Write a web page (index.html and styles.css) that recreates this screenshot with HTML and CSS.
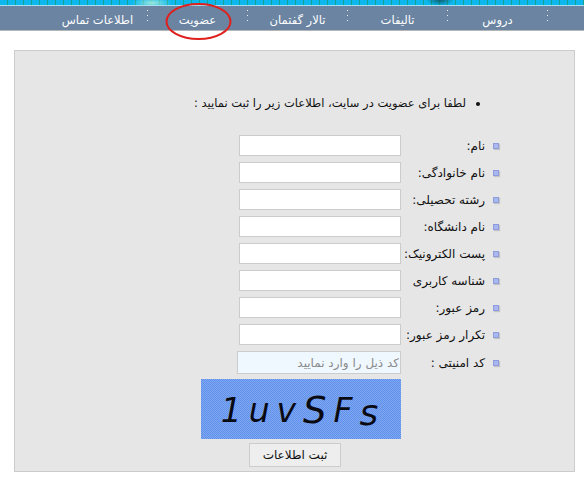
FILE: index.html
```html
<!DOCTYPE html>
<html lang="fa" dir="rtl">
<head>
    <meta charset="UTF-8">
    <meta name="viewport" content="width=device-width, initial-scale=1.0">
    <title>عضویت</title>
    <link rel="stylesheet" href="styles.css">
</head>
<body>
    <div class="top-strip"></div>
    <nav class="nav">
        <a class="nav-item nav-edge"></a>
        <span class="sep"></span>
        <a class="nav-item">دروس</a>
        <span class="sep"></span>
        <a class="nav-item">تالیفات</a>
        <span class="sep"></span>
        <a class="nav-item">تالار گفتمان</a>
        <span class="sep"></span>
        <a class="nav-item nav-active">عضویت
            <svg class="circle" width="70" height="42" viewBox="0 0 70 42"><ellipse cx="35.5" cy="21.5" rx="32" ry="17.5" fill="none" stroke="#e0201c" stroke-width="2"/></svg>
        </a>
        <span class="sep"></span>
        <a class="nav-item">اطلاعات تماس</a>
    </nav>

    <main class="card">
        <ul class="intro">
            <li>لطفا برای عضویت در سایت، اطلاعات زیر را ثبت نمایید :</li>
        </ul>
        <form class="form">
            <div class="row"><span class="mark"></span><label class="label">نام:</label><input class="field" type="text"></div>
            <div class="row"><span class="mark"></span><label class="label">نام خانوادگی:</label><input class="field" type="text"></div>
            <div class="row"><span class="mark"></span><label class="label">رشته تحصیلی:</label><input class="field" type="text"></div>
            <div class="row"><span class="mark"></span><label class="label">نام دانشگاه:</label><input class="field" type="text"></div>
            <div class="row"><span class="mark"></span><label class="label">پست الکترونیک:</label><input class="field" type="text"></div>
            <div class="row"><span class="mark"></span><label class="label">شناسه کاربری</label><input class="field" type="text"></div>
            <div class="row"><span class="mark"></span><label class="label">رمز عبور:</label><input class="field" type="password"></div>
            <div class="row"><span class="mark"></span><label class="label">تکرار رمز عبور:</label><input class="field" type="password"></div>
            <div class="row row-code"><span class="mark"></span><label class="label">کد امنیتی :</label><input class="field field-code" type="text" placeholder="کد ذیل را وارد نمایید"></div>
            <div class="captcha" dir="ltr"><span>1</span><span>u</span><span>v</span><span class="big">S</span><span>F</span><span class="low">s</span></div>
            <button class="submit" type="button">ثبت اطلاعات</button>
        </form>
    </main>
</body>
</html>
```

FILE: styles.css
```css
* {
    box-sizing: border-box;
}
body {
    margin: 0;
    background: #ffffff;
    color: #111111;
    font-family: Tahoma, "DejaVu Sans", sans-serif;
    font-size: 12px;
    overflow: hidden;
}
.top-strip {
    height: 6px;
    background:
        radial-gradient(ellipse 14px 6px at 440px 0, #0f5f6e, transparent),
        radial-gradient(ellipse 20px 6px at 152px 3px, #9fe8dc, transparent),
        repeating-linear-gradient(90deg, #0cb8ee 0, #0cb8ee 7px, #1aa08e 7px, #1aa08e 8px);
    border-bottom: 1px solid #a6dff2;
}
.nav {
    display: flex;
    align-items: center;
    height: 25px;
    background: #6a84a2;
    border-bottom: 1px solid #b5b5b5;
    color: #ffffff;
}
.nav-item {
    position: relative;
    width: 99px;
    padding-top: 3px;
    text-align: center;
    font-size: 11.5px;
}
.nav-edge {
    width: 36px;
}
.sep {
    width: 1px;
    height: 14px;
    margin-top: -2px;
    background: repeating-linear-gradient(180deg, #eef2f6 0, #eef2f6 1px, transparent 1px, transparent 5px);
}
.circle {
    position: absolute;
    left: 15px;
    top: -10px;
}
.card {
    margin: 19px 9px 0 14px;
    height: 422px;
    background: #e6e6e6;
    border: 1px solid #cccccc;
    padding-top: 45px;
}
.intro {
    margin: 0;
    padding: 0 108px 0 0;
    list-style: disc;
    font-size: 11.5px;
}
.form {
    display: flex;
    flex-direction: column;
    align-items: flex-start;
    margin-top: 25px;
    padding-right: 75px;
}
.row {
    display: flex;
    align-items: center;
    height: 21px;
    margin-bottom: 6px;
}
.mark {
    width: 6px;
    height: 6px;
    margin-left: 8px;
    background: #aab6ee;
    border: 1px solid #8d9cdc;
    box-shadow: 1px 1px 1px #c4c4c4;
}
.label {
    width: 80px;
    margin-left: 4px;
    padding-top: 1px;
    white-space: nowrap;
}
.field {
    width: 162px;
    height: 21px;
    background: #ffffff;
    border: 1px solid #cccccc;
    padding: 0 2px;
    font-family: inherit;
    font-size: 12px;
}
.row-code {
    height: 23px;
    margin-bottom: 5px;
}
.field-code {
    width: 164px;
    height: 23px;
    padding-right: 1px;
    background: #eff7ff;
}
.field-code::placeholder {
    color: #8a8a8a;
}
.captcha {
    width: 200px;
    height: 60px;
    margin-right: 98px;
    padding: 3px 3px 0 0;
    display: flex;
    align-items: center;
    justify-content: center;
    gap: 7px;
    background: repeating-conic-gradient(#80a8f2 0 25%, #5f91ea 0 50%) 0 0 / 2px 2px;
    color: #0a0a12;
    font-family: "DejaVu Sans", sans-serif;
    font-style: italic;
    font-size: 33px;
    line-height: 57px;
}
.captcha .big {
    font-size: 37px;
}
.captcha .low {
    font-size: 36px;
    padding-top: 4px;
}
.submit {
    width: 92px;
    height: 24px;
    margin: 4px 158px 0 0;
    background: #eeeeee;
    border: 1px solid #cccccc;
    color: #111111;
    font-family: inherit;
    font-size: 12px;
    padding: 0;
}
```
